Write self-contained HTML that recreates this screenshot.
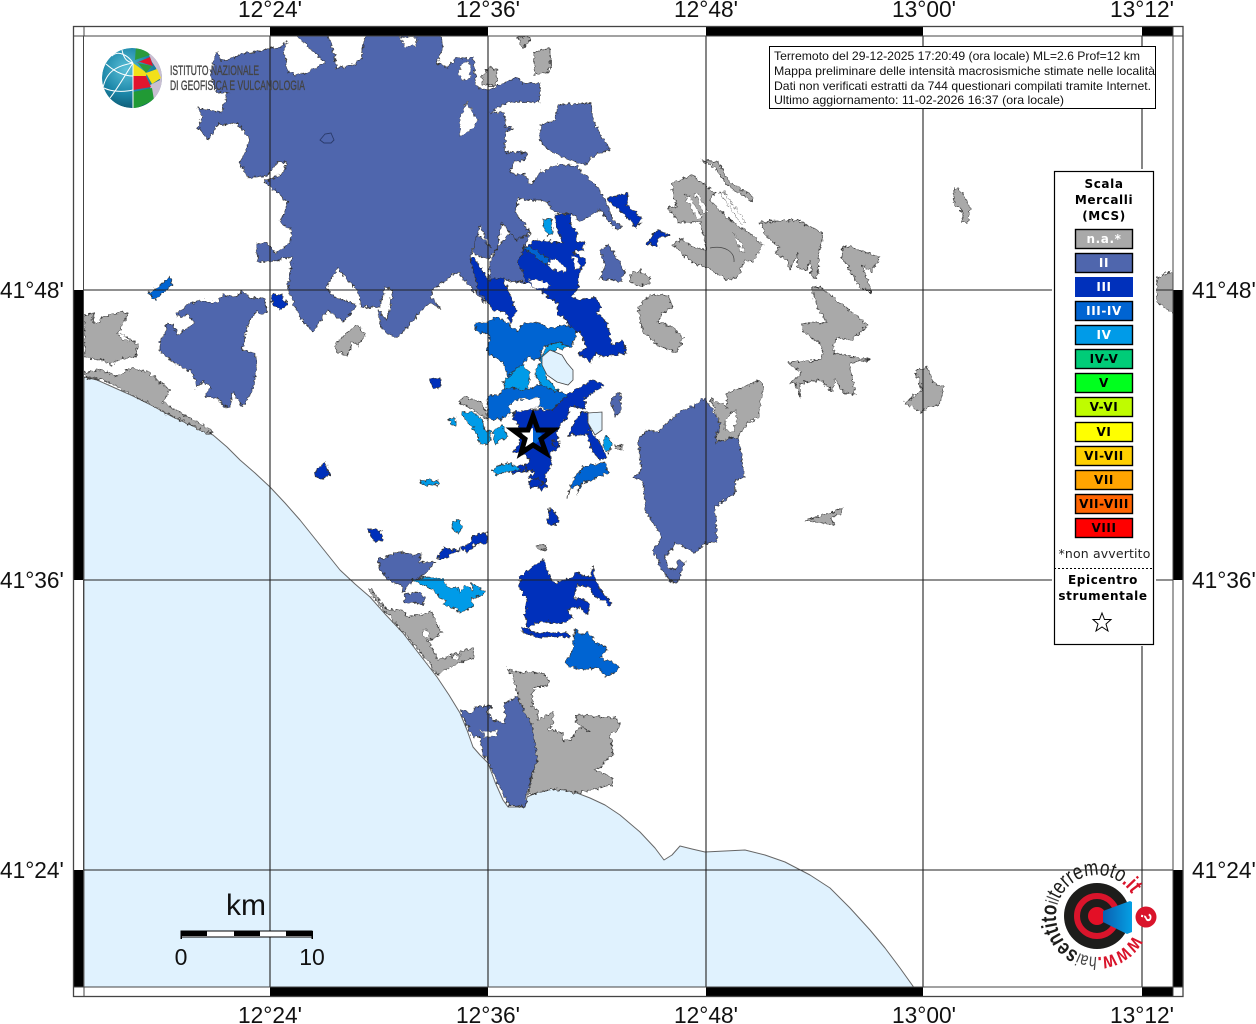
<!DOCTYPE html>
<html><head><meta charset="utf-8"><style>
html,body{margin:0;padding:0;background:#fff}
svg{display:block}
.ax{font:22.7px "Liberation Sans",sans-serif;fill:#111}
.m polygon,.m path{stroke:#333;stroke-width:.7;stroke-linejoin:round}
.g{fill:#A9A9A9}.b2{fill:#4F66AD}.b3{fill:#0030BB}.b34{fill:#0064D2}.b4{fill:#009BE8}.h{fill:#fff;stroke:#444!important;stroke-width:.5!important}
.info{font:12px "Liberation Sans",sans-serif;fill:#111}
.lg{font:bold 12px "DejaVu Sans",sans-serif;text-anchor:middle;letter-spacing:.6px}
.sw{stroke:#000;stroke-width:1.4}
</style></head><body>
<svg width="1256" height="1024" viewBox="0 0 1256 1024" xmlns="http://www.w3.org/2000/svg">
<defs>
<filter id="rough" filterUnits="userSpaceOnUse" x="0" y="0" width="1256" height="1024" color-interpolation-filters="sRGB">
<feTurbulence type="fractalNoise" baseFrequency="0.28" numOctaves="2" seed="4"/>
<feDisplacementMap in="SourceGraphic" scale="6" xChannelSelector="R" yChannelSelector="G"/>
</filter>
<clipPath id="inner"><rect x="84" y="36" width="1089" height="951"/></clipPath>
<clipPath id="gl"><circle cx="132" cy="78" r="30"/></clipPath>
<radialGradient id="sph" cx=".4" cy=".35" r=".75"><stop offset="0" stop-color="#5cc0d8"/><stop offset=".55" stop-color="#1b86a8"/><stop offset="1" stop-color="#0b4f66"/></radialGradient>
<linearGradient id="cone" x1="0" y1="0" x2="1" y2="0"><stop offset="0" stop-color="#0b5fb0"/><stop offset="1" stop-color="#04a0e4"/></linearGradient>
</defs>
<rect width="1256" height="1024" fill="#fff"/>
<g clip-path="url(#inner)">
<polygon fill="#E0F2FE" stroke="#666" stroke-width="1" stroke-linejoin="round" points="84,377 97,380 115,388 133,396 153,406 173,417 193,426 213,435 227,447 240,460 255,473 270,487 285,503 300,520 320,545 340,570 355,584 370,597 386,615 403,633 420,655 437,677 449,695 460,713 467,730 473,747 480,755 488,763 495,782 503,800 508,807 525,807 527,797 540,791 553,788 565,790 577,793 590,798 605,805 620,815 640,832 655,848 664,860 672,855 680,846 692,849 705,852 725,851 745,850 765,855 785,862 810,875 830,888 850,908 870,930 885,948 900,968 915,989 84,989"/>
<g class="m" filter="url(#rough)">
<!-- Rome -->
<polygon class="b2" points="198,108 210,110 222,113 225,100 228,92 217,93 210,73 217,52 220,60 227,60 245,53 252,53 270,48 280,47 287,42 283,52 287,63 287,70 295,75 308,72 325,63 315,53 303,42 295,33 327,33 333,50 337,68 353,65 362,58 365,33 440,33 443,47 437,63 447,67 457,58 473,58 475,73 477,88 488,90 517,77 523,83 540,83 540,102 508,102 490,113 505,112 505,127 513,128 505,132 505,153 513,152 527,153 525,160 513,162 510,173 525,175 530,185 540,173 555,165 575,165 600,190 607,205 613,220 623,227 617,230 610,222 600,210 580,222 572,213 555,213 548,203 540,200 525,200 518,198 515,212 530,232 517,240 510,232 502,223 497,248 488,260 473,253 477,233 490,247 480,225 470,258 485,303 457,272 433,289 430,297 442,309 430,303 420,312 412,322 397,338 382,330 378,310 387,320 393,290 385,287 380,307 362,307 357,290 337,268 327,287 330,295 357,305 343,322 328,310 313,332 300,317 288,290 292,257 270,262 258,262 256,243 268,243 275,253 290,243 292,230 280,222 288,203 277,192 265,182 283,173 287,162 277,162 268,175 248,178 240,163 250,140 237,123 218,125 208,140 198,127 202,117"/>
<polygon class="b2" points="490,262 497,248 510,232 517,240 530,233 523,250 518,262 530,283 510,281 500,278 488,282"/>
<polygon class="h" points="467,102 477,120 473,128 460,137 460,117"/>
<polygon class="h" points="400,37 417,37 416,45 405,47"/>
<polygon class="h" points="458,75 462,62 470,62 470,78 465,80"/>
<polygon class="b2" points="540,125 555,120 558,105 590,103 595,125 610,150 595,155 585,165 570,160 548,150 540,140"/>
<polygon class="b2" points="177,313 187,305 200,300 217,303 223,295 237,297 242,290 250,298 265,298 267,312 260,315 257,310 248,323 242,350 255,353 257,360 253,390 243,407 233,392 230,407 225,408 217,398 205,397 210,387 204,380 197,388 193,373 173,362 160,352 160,342 165,333 167,323 173,325 177,335 195,323 188,315 180,318"/>
<!-- grey -->
<polygon class="g" points="84,315 93,313 93,323 100,323 102,317 122,312 128,313 118,333 132,340 138,345 135,358 122,358 110,365 103,360 85,358"/>
<polygon class="h" points="118,333 125,335 130,342 122,340"/>
<polygon class="g" points="84,372 103,370 115,377 132,368 148,372 170,390 163,402 188,417 203,425 213,432 207,433 160,410 133,395 110,383 97,378 86,378"/>
<polygon class="g" points="370,588 387,610 402,610 408,617 432,612 438,627 443,633 428,640 438,660 472,648 474,657 450,667 438,675 413,643 390,617 370,593"/>
<polygon class="h" points="422,628 430,632 428,638 423,636"/>
<polygon class="h" points="450,657 462,655 456,660"/>
<polygon class="g" points="507,668 513,672 543,673 550,680 548,685 533,688 532,707 538,710 538,720 553,712 553,723 548,730 563,733 563,742 570,740 580,727 590,732 575,722 577,715 615,718 620,723 618,730 610,735 613,753 600,768 594,770 612,777 612,785 577,793 555,789 528,795 530,783 537,760 533,737 520,703 513,677"/>
<polygon class="g" points="672,183 692,175 715,193 710,200 730,220 745,230 763,245 753,262 745,260 737,278 727,280 707,268 692,262 673,245 682,238 692,247 707,250 700,222 678,222 668,207 677,207 672,193"/>
<polygon class="h" points="684,195 690,197 702,218 698,220"/>
<polygon class="h" points="694,193 700,196 708,212 704,213"/>
<polygon class="h" points="733,232 738,238 745,252 741,252"/>
<polygon class="h" points="720,193 724,192 745,222 742,225"/>
<polygon class="g" points="702,160 718,162 730,183 752,195 752,202 727,185 715,168"/>
<polygon class="g" points="760,222 797,220 823,233 820,250 817,278 812,278 810,260 807,270 797,268 798,253 790,270 787,260 775,253 780,247 767,237"/>
<polygon class="g" points="843,245 880,257 872,272 862,265 872,293 860,287 842,257"/>
<polygon class="g" points="812,288 820,287 853,313 868,325 852,340 837,338 834,345 833,353 870,360 850,363 855,395 843,393 835,378 833,392 820,380 800,383 800,397 795,383 790,383 802,373 788,363 820,360 823,352 820,343 803,332 802,323 827,323 817,307"/>
<polygon class="g" points="915,370 928,368 933,383 944,387 940,405 927,407 922,413 905,403 922,390"/>
<polygon class="g" points="955,188 963,193 970,208 968,223 962,222 963,213 953,202"/>
<polygon class="g" points="630,274 640,271 650,277 649,284 638,286 631,282"/>
<polygon class="g" points="638,307 650,295 668,295 673,307 662,313 658,322 673,327 683,338 677,352 660,347 643,332"/>
<polygon class="g" points="1157,277 1175,270 1175,315 1165,308 1157,302"/>
<polygon class="g" points="517,37 530,37 528,44 522,47"/>
<polygon class="g" points="534,52 550,48 550,72 534,75"/>
<polygon class="g" points="482,75 490,67 497,70 496,85 482,85"/>
<polygon class="g" points="335,345 350,330 358,325 365,335 358,345 352,342 348,355 337,352"/>
<polygon class="g" points="805,520 825,515 842,508 840,515 830,518 835,525 815,522"/>
<polygon class="g" points="615,445 623,446 623,449 615,449"/>
<polygon class="g" points="536,546 545,544 547,549 540,550"/>
<polygon class="g" points="458,402 465,397 483,403 488,420 478,413 470,408"/>
<!-- east Colli -->
<polygon class="b2" points="638,440 647,430 658,432 670,420 682,410 692,407 705,398 720,423 715,442 738,437 745,477 735,480 735,493 715,507 717,542 705,543 695,553 675,542 673,547 665,557 668,568 675,570 678,560 685,562 678,582 672,583 662,570 653,550 662,537 645,510 643,480 633,478 642,470 640,460"/>
<polygon class="g" points="710,398 727,407 727,393 743,387 760,380 763,388 758,417 748,423 738,437 715,442 720,423"/>
<polygon class="h" points="725,420 735,410 738,420 733,432 725,430"/>
<polygon class="b2" points="617,393 621,394 621,410 616,417 612,405 610,403"/>
<polygon class="b2" points="600,250 608,245 615,255 625,272 620,282 610,280 600,278 605,265"/>
<!-- Nettuno -->
<polygon class="b2" points="460,710 473,713 475,707 492,706 487,711 492,720 505,723 505,703 517,697 533,727 537,760 528,787 525,807 508,805 500,787 487,760 482,750 480,737 473,738"/>
<polygon class="h" points="480,731 498,731 497,737 485,737"/>
<!-- Pomezia -->
<polygon class="b2" points="378,560 398,552 405,553 413,555 422,553 418,563 435,562 422,577 413,580 403,592 401,585 392,583 380,570"/>
<polygon class="b2" points="405,594 420,592 425,600 423,605 412,602 404,603"/>
<polygon class="b4" points="413,580 427,577 443,579 448,587 458,587 460,593 465,585 473,590 472,583 485,592 483,595 472,598 472,608 460,613 453,607 443,605 445,600 440,598 430,588 420,584"/>
<polygon class="b3" points="437,560 443,548 457,550 470,543 473,535 487,533 487,543 475,545 467,553 462,548 447,557"/>
<polygon class="b3" points="368,528 376,530 383,533 382,541 375,541 370,535"/>
<polygon class="b4" points="452,522 460,520 462,530 458,533 451,527"/>
<!-- Ardea -->
<polygon class="b3" points="543,560 552,580 555,583 573,577 575,573 590,577 593,567 595,580 600,590 612,603 610,605 593,595 590,587 577,585 573,598 587,600 590,608 587,615 580,608 572,608 567,610 573,618 563,623 550,622 537,623 528,628 525,615 527,600 520,588 520,577 533,567"/>
<polygon class="b3" points="522,627 537,633 568,633 570,637 537,637 522,632"/>
<polygon class="b34" points="575,630 582,635 588,632 595,643 608,648 600,658 612,662 620,668 608,677 597,667 587,670 570,667 565,663 573,650"/>
<!-- north castelli -->
<polygon class="b3" points="555,215 572,213 570,223 577,232 577,242 585,242 583,250 573,252 580,257 586,260 585,265 580,270 578,287 572,297 577,300 595,297 602,307 597,313 607,323 612,345 622,340 627,353 600,357 597,352 590,363 578,353 587,347 580,333 573,330 565,318 558,315 557,303 543,293 527,283 518,262 523,250 535,240 563,243 555,223"/>
<polygon class="h" points="547,262 555,258 567,268 565,272 552,270"/>
<polygon class="h" points="528,280 540,280 550,285 548,288 535,288"/>
<polygon class="h" points="572,255 578,258 580,270 575,268"/>
<polygon class="b34" points="523,247 530,247 548,258 547,265 537,258"/>
<polygon class="b3" points="470,260 475,258 488,280 503,278 507,287 515,307 517,310 510,323 505,312 493,310 478,290 475,275"/>
<polygon class="b4" points="543,220 551,219 553,232 548,235 545,230"/>
<polygon class="b3" points="647,243 657,230 670,235 658,238 658,248"/>
<polygon class="b3" points="607,198 628,193 627,205 642,218 637,228 625,215 612,204"/>
<polygon class="b34" points="149,293 170,278 173,285 155,300"/>
<polygon class="b3" points="272,295 282,295 287,305 280,310 272,304"/>
<polygon class="b3" points="430,379 440,378 441,388 433,388"/>
<polygon class="b3" points="314,473 325,462 330,475 320,480"/>
<!-- lakes area -->
<polygon class="b34" points="475,323 487,322 497,317 508,323 517,332 523,323 540,323 548,328 568,325 577,332 572,347 555,343 543,347 540,360 527,357 522,367 507,387 507,373 503,363 487,352 490,335 475,330"/>
<polygon class="b4" points="540,360 547,345 560,342 570,347 555,350 545,357 545,375 557,390 565,395 545,390 535,375"/>
<polygon class="b4" points="503,382 520,365 530,372 527,392 510,398"/>
<polygon class="b34" points="487,397 500,394 505,388 527,390 540,385 567,395 553,410 530,405 510,413 500,420 488,418"/>
<polygon class="b3" points="567,395 592,380 605,385 585,398 585,408 570,406 567,418 557,428 557,435 560,448 550,452 552,463 545,475 547,487 540,492 538,480 528,478 535,472 522,470 530,460 520,452 513,452 518,445 522,432 512,415 517,410 543,410 553,410"/>
<polygon class="b3" points="552,440 560,442 557,448 553,446"/>
<polygon class="b3" points="528,482 538,478 545,484 530,488"/>
<polygon class="b3" points="510,470 525,464 528,470 514,474"/>
<polygon class="h" points="508,407 515,400 540,398 540,405 530,410 512,412"/>
<polygon class="b3" points="582,412 587,412 590,430 600,443 607,458 600,460 593,452 587,435 568,435 575,420"/>
<polygon class="b4" points="607,435 613,445 608,453 603,445"/>
<polygon class="b34" points="605,462 608,473 590,480 582,483 577,495 580,485 570,488 567,497 573,480 583,467"/>
<polygon class="b4" points="462,413 472,412 483,420 485,430 492,432 488,445 480,445 475,430 467,422"/>
<polygon class="b4" points="449,419 456,417 456,425 451,425"/>
<polygon class="b4" points="493,432 502,425 508,437 500,440 495,445"/>
<polygon class="b4" points="492,470 500,465 510,463 522,470 505,472 495,475"/>
<polygon class="b3" points="550,508 553,510 560,520 555,525 547,524"/>
<polygon class="b4" points="420,480 438,481 438,485 422,485"/>
</g>
<!-- lake outlines -->
<polygon fill="#E0F2FE" stroke="#444" stroke-width=".8" points="542,357 550,350 562,355 567,363 573,370 573,380 568,385 557,382 547,375 542,365"/>
<polygon fill="#E0F2FE" stroke="#444" stroke-width=".8" points="588,413 602,412 602,430 595,435 588,423"/>
<polygon fill="none" stroke="#2a3a6a" stroke-width=".9" points="320,140 325,134 331,133 334,140 331,143 324,143"/>
<path d="M710 248C725 245 735 252 734 262" fill="none" stroke="#444" stroke-width=".7"/>
<!-- epicentre star -->
<polygon fill="#fff" points="533,428 522,432 525,447 533,445"/>
<polygon fill="#0064D2" points="533,430 542,434 538,442 533,445"/>
<polygon fill="none" stroke="#000" stroke-width="5" stroke-linejoin="miter" points="533,416 538,430 553,430 541,439 546,453 533,445 521,453 525,439 513,430 528,430"/>
</g>
<!-- grid -->
<g stroke="#222" stroke-width="1.1" fill="none">
<path d="M270 36V987M488 36V987M706 36V987M923 36V987M1142 36V987M84 290H1173M84 580H1173M84 870H1173"/>
</g>
<!-- frame -->
<g fill="#000">
<rect x="270" y="26" width="218" height="10"/><rect x="706" y="26" width="217" height="10"/><rect x="1142" y="26" width="31" height="10"/>
<rect x="270" y="987" width="218" height="10"/><rect x="706" y="987" width="217" height="10"/><rect x="1142" y="987" width="31" height="10"/>
<rect x="73" y="290" width="11" height="290"/><rect x="73" y="870" width="11" height="117"/>
<rect x="1173" y="290" width="10" height="290"/><rect x="1173" y="870" width="10" height="117"/>
</g>
<rect x="73.5" y="26.5" width="1109.5" height="970" fill="none" stroke="#444" stroke-width="1.3"/>
<rect x="83.5" y="36" width="1089.5" height="951" fill="none" stroke="#444" stroke-width="1"/>
<path d="M73 36H84V26M1173 26V36H1183M73 987H84V997M1173 997V987H1183" fill="none" stroke="#444"/>
<!-- axis labels -->
<g class="ax" text-anchor="middle">
<text x="270" y="17">12°24'</text><text x="488" y="17">12°36'</text><text x="706" y="17">12°48'</text><text x="924" y="17">13°00'</text><text x="1142" y="17">13°12'</text>
<text x="270" y="1023">12°24'</text><text x="488" y="1023">12°36'</text><text x="706" y="1023">12°48'</text><text x="924" y="1023">13°00'</text><text x="1142" y="1023">13°12'</text>
</g>
<g class="ax">
<text x="0" y="298">41°48'</text><text x="0" y="588">41°36'</text><text x="0" y="878">41°24'</text>
<text x="1192" y="298">41°48'</text><text x="1192" y="588">41°36'</text><text x="1192" y="878">41°24'</text>
</g>
<!-- INGV logo -->
<g clip-path="url(#gl)">
<circle cx="132" cy="78" r="30" fill="url(#sph)"/>
<polygon fill="#c9bfd2" points="146,48 166,60 166,98 152,100 150,85 160,80 156,68 152,62"/>
<polygon fill="#2c9a3c" points="135,60 150,55 142,46 136,46"/>
<polygon fill="#e0152e" points="136,63 150,57 153,66 140,62"/>
<polygon fill="#f2e01a" points="133,63 147,73 146,76 133,76"/>
<polygon fill="#2c9a3c" points="138,63 152,66 146,73"/>
<polygon fill="#f2e01a" points="146,73 157,69 161,78 152,84"/>
<polygon fill="#e0152e" points="133,76 146,76 151,87 133,90"/>
<polygon fill="#219a35" points="133,92 152,88 154,100 133,110"/>
<g fill="none" stroke="#fff" stroke-width="1">
<path d="M122 50C124 60 128 62 133 63M133 63C116 66 106 72 103 88M133 108V63M133 63C127 72 118 88 110 98M106 64C115 72 124 76 133 76M104 88C112 92 124 92 133 90M133 63C128 55 118 50 112 56"/>
</g>
</g>
<text x="170" y="75" font-family="'Liberation Sans Narrow','Liberation Sans',sans-serif" font-size="14" fill="#444" stroke="#444" stroke-width=".35" textLength="89" lengthAdjust="spacingAndGlyphs">ISTITUTO NAZIONALE</text>
<text x="170" y="90" font-family="'Liberation Sans Narrow','Liberation Sans',sans-serif" font-size="14" fill="#444" stroke="#444" stroke-width=".35" textLength="135" lengthAdjust="spacingAndGlyphs">DI GEOFISICA E VULCANOLOGIA</text>
<!-- info box -->
<rect x="769.5" y="46.5" width="386" height="62" fill="#fff" stroke="#000"/>
<g class="info">
<text x="774" y="60" textLength="366" lengthAdjust="spacingAndGlyphs">Terremoto del 29-12-2025 17:20:49 (ora locale) ML=2.6 Prof=12 km</text>
<text x="774" y="75" textLength="381" lengthAdjust="spacingAndGlyphs">Mappa preliminare delle intensità macrosismiche stimate nelle località</text>
<text x="774" y="90" textLength="377" lengthAdjust="spacingAndGlyphs">Dati non verificati estratti da 744 questionari compilati tramite Internet.</text>
<text x="774" y="104" textLength="290" lengthAdjust="spacingAndGlyphs">Ultimo aggiornamento: 11-02-2026 16:37 (ora locale)</text>
</g>
<!-- legend -->
<rect x="1052" y="169" width="104" height="477" fill="#fff"/>
<rect x="1054.5" y="171.5" width="99" height="473" fill="#fff" stroke="#000" stroke-width="1.2"/>
<g class="lg" fill="#000"><text x="1104" y="188">Scala</text><text x="1104" y="204">Mercalli</text><text x="1104" y="220">(MCS)</text></g>
<g class="sw">
<rect x="1075.5" y="229.5" width="57" height="19" fill="#A9A9A9"/>
<rect x="1075.5" y="253.5" width="57" height="19" fill="#4F66AD"/>
<rect x="1075" y="277" width="58" height="20" fill="#0030BB" stroke="none"/>
<rect x="1075.5" y="301.5" width="57" height="19" fill="#0064D2"/>
<rect x="1075.5" y="325.5" width="57" height="19" fill="#009BE8"/>
<rect x="1075.5" y="349.5" width="57" height="19" fill="#00CC78"/>
<rect x="1075.5" y="373.5" width="57" height="19" fill="#00FF1E"/>
<rect x="1075.5" y="397.5" width="57" height="19" fill="#BFFC00"/>
<rect x="1075.5" y="422.5" width="57" height="19" fill="#FFFF00"/>
<rect x="1075.5" y="446.5" width="57" height="19" fill="#FFD000"/>
<rect x="1075.5" y="470.5" width="57" height="19" fill="#FFA500"/>
<rect x="1075.5" y="494.5" width="57" height="19" fill="#FF6400"/>
<rect x="1075.5" y="518.5" width="57" height="19" fill="#FF0000"/>
</g>
<g class="lg" fill="#fff">
<text x="1104" y="243">n.a.*</text><text x="1104" y="267">II</text><text x="1104" y="291">III</text><text x="1104" y="315">III-IV</text><text x="1104" y="339">IV</text>
</g>
<g class="lg" fill="#000">
<text x="1104" y="363">IV-V</text><text x="1104" y="387">V</text><text x="1104" y="411">V-VI</text><text x="1104" y="436">VI</text><text x="1104" y="460">VI-VII</text><text x="1104" y="484">VII</text><text x="1104" y="508">VII-VIII</text><text x="1104" y="532">VIII</text>
<text x="1104.5" y="558" style="font-weight:normal;font-size:12.5px;letter-spacing:.15px" fill="#222">*non avvertito</text>
<text x="1103" y="584">Epicentro</text><text x="1103" y="600">strumentale</text>
</g>
<line x1="1054" y1="568.5" x2="1152" y2="568.5" stroke="#000" stroke-dasharray="2 2"/>
<polygon fill="#fff" stroke="#000" stroke-width="1" points="1102,613 1104.5,619.5 1111,619.5 1106,624 1108,631 1102,627 1096,631 1098,624 1093,619.5 1099.5,619.5"/>
<!-- scale -->
<text x="246" y="915" font-family="'Liberation Sans',sans-serif" font-size="30" fill="#111" text-anchor="middle">km</text>
<rect x="181" y="931" width="131" height="6" fill="#fff" stroke="#000"/>
<g fill="#000"><rect x="181" y="931" width="26" height="5"/><rect x="234" y="931" width="26" height="5"/><rect x="286" y="931" width="26" height="5"/>
<rect x="180.5" y="931" width="1.5" height="8"/><rect x="311.5" y="931" width="1.5" height="8"/></g>
<g font-family="'Liberation Sans',sans-serif" font-size="23" fill="#111" text-anchor="middle"><text x="181" y="965">0</text><text x="312" y="965">10</text></g>
<!-- hai sentito logo -->
<circle cx="1097" cy="916" r="33" fill="#1d1d1b"/>
<circle cx="1097" cy="916" r="20" fill="none" stroke="#d9142b" stroke-width="6"/>
<circle cx="1097" cy="916" r="9" fill="#e30f26"/>
<polygon fill="url(#cone)" points="1103,911 1130,901 1132,902 1132,932 1127,934 1103,922"/>
<circle cx="1146" cy="917" r="10.5" fill="#d9142b"/>
<text x="1146" y="922" font-family="'Liberation Sans',sans-serif" font-weight="bold" font-size="15" fill="#fff" text-anchor="middle" transform="rotate(100 1146 917)">?</text>
<path id="arc" d="M1133.2 935.2A41 41 0 1 1 1131.4 893.7" fill="none"/>
<text font-family="'Liberation Sans',sans-serif" font-size="22" fill="#1d1d1b" textLength="214" lengthAdjust="spacingAndGlyphs"><textPath href="#arc"><tspan fill="#d9142b" font-weight="bold">www.</tspan><tspan fill="#444" font-size="18">hai</tspan><tspan font-weight="bold">sentito</tspan><tspan fill="#444" font-size="18">il</tspan><tspan>terremoto</tspan><tspan fill="#d9142b" font-weight="bold">.it</tspan></textPath></text>
</svg>
</body></html>
